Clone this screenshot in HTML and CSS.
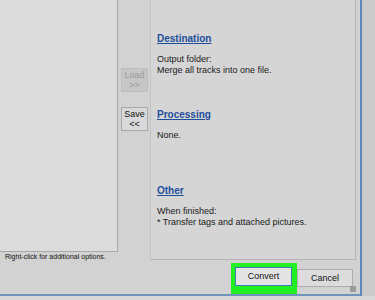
FILE: index.html
```html
<!DOCTYPE html>
<html lang="en">
<head>
    <meta charset="UTF-8">
    <meta name="viewport" content="width=device-width, initial-scale=1.0">
    <title>Convert</title>
    <link rel="stylesheet" href="styles.css">
</head>
<body>
    <div class="window">
        <div class="main">
            <div class="top">
                <div class="left">
                    <div class="list"></div>
                    <div class="hint">Right-click for additional options.</div>
                </div>
                <div class="mid">
                    <div class="small-btn disabled">Load<br>&gt;&gt;</div>
                    <div class="small-btn">Save<br>&lt;&lt;</div>
                </div>
                <div class="panel">
                    <div class="section">
                        <a class="head" href="#">Destination</a>
                        <p>Output folder:<br>Merge all tracks into one file.</p>
                    </div>
                    <div class="section">
                        <a class="head" href="#">Processing</a>
                        <p>None.</p>
                    </div>
                    <div class="section">
                        <a class="head" href="#">Other</a>
                        <p>When finished:<br>* Transfer tags and attached pictures.</p>
                    </div>
                </div>
            </div>
            <div class="bottom">
                <div class="highlight"><div class="btn default">Convert</div></div>
                <div class="btn">Cancel</div>
                <div class="grip"></div>
            </div>
        </div>
        <div class="edge"></div>
    </div>
</body>
</html>
```

FILE: styles.css
```css
body {
    margin: 0;
    padding: 0;
    width: 375px;
    height: 300px;
    overflow: hidden;
    background: #d8d8d8;
    font-family: "Liberation Sans", "DejaVu Sans", sans-serif;
    color: #1a1a1a;
}
.window {
    display: flex;
    height: 296px;
}
.main {
    width: 360px;
    display: flex;
    flex-direction: column;
    background: #d2d2d2;
    border-bottom: 2px solid #6f93bd;
}
.edge {
    width: 13px;
    background: #cbcbcb;
    border-left: 2px solid #5f88b8;
}
.top {
    display: flex;
    height: 263px;
}
.left {
    width: 118px;
}
.list {
    height: 252px;
    box-sizing: border-box;
    background: #dcdcdc;
    border-right: 1px solid #a9a9a9;
    border-bottom: 1px solid #a9a9a9;
}
.hint {
    font-size: 7px;
    padding: 1px 0 0 5px;
    color: #111;
}
.mid {
    width: 32px;
    padding: 68px 0 0 3px;
    box-sizing: border-box;
    display: flex;
    flex-direction: column;
    gap: 15px;
}
.small-btn {
    width: 27px;
    height: 24px;
    box-sizing: border-box;
    background: #d9d9d9;
    border: 1px solid #a8a8a8;
    font-size: 9px;
    line-height: 10px;
    text-align: center;
    padding-top: 1px;
    color: #111;
}
.small-btn.disabled {
    background: #c6c6c6;
    color: #9a9a9a;
    border-color: #bdbdbd;
}
.panel {
    width: 206px;
    box-sizing: border-box;
    background: #d5d5d5;
    border-left: 1px solid #c4c4c4;
    border-right: 1px solid #b5b5b5;
    border-bottom: 1px solid #b5b5b5;
    padding: 28px 0 0 6px;
}
.section {
    height: 76px;
}
.head {
    display: inline-block;
    font-weight: bold;
    font-size: 10px;
    color: #1f4f9c;
    text-decoration: underline;
}
.section p {
    margin: 8px 0 0;
    font-size: 9px;
    line-height: 11px;
}
.bottom {
    flex: 1;
    display: flex;
    align-items: flex-start;
    padding: 3px 0 0 231px;
    position: relative;
}
.highlight {
    border-style: solid;
    border-color: #22ee22;
    border-width: 4px 5px 8px 4px;
    background: #2ef02e;
    z-index: 1;
}
.btn {
    width: 57px;
    height: 19px;
    box-sizing: border-box;
    background: #dcdcdc;
    border: 1px solid #adadad;
    font-size: 9px;
    line-height: 17px;
    text-align: center;
    color: #111;
}
.highlight + .btn {
    margin-top: 6px;
    width: 56px;
    height: 18px;
    line-height: 16px;
}
.btn.default {
    background: #e4e4e4;
    border-color: #3c7fb1;
}
.grip {
    position: absolute;
    right: 4px;
    bottom: 2px;
    width: 6px;
    height: 6px;
    background: radial-gradient(circle, #888 0.6px, transparent 1px) 0 0 / 2px 2px;
}
```
